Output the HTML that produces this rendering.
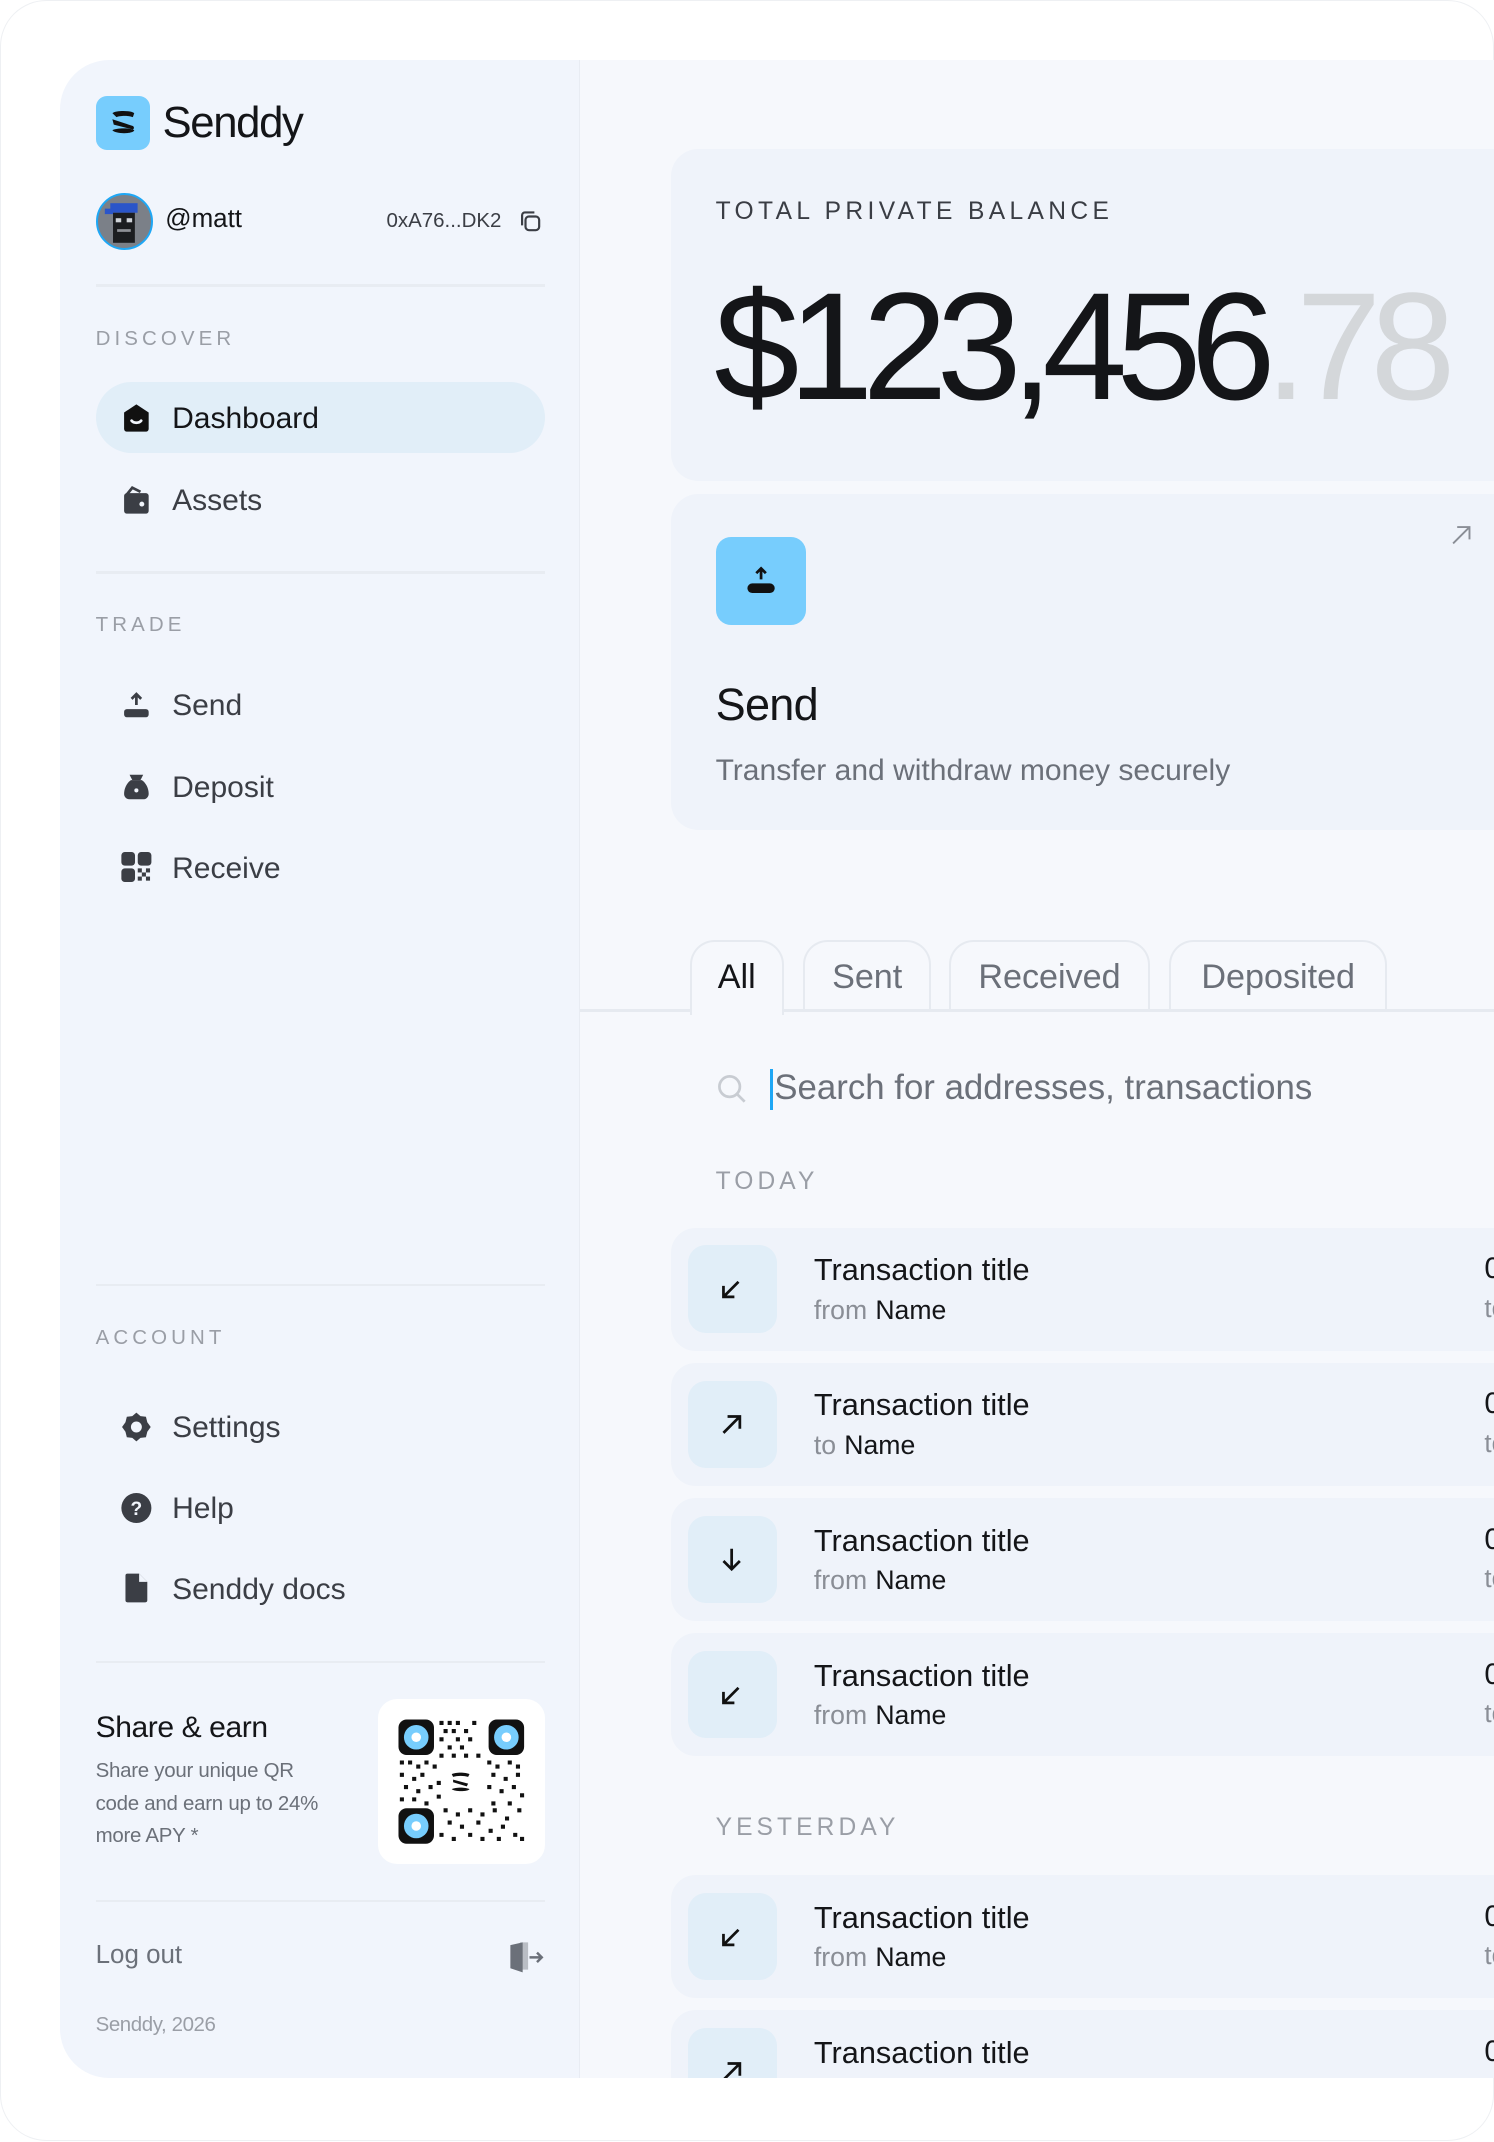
<!DOCTYPE html>
<html><head><meta charset="utf-8"><style>
html{zoom:1.36563}
*{margin:0;padding:0;box-sizing:border-box}
body{width:1094px;height:1568px;background:#fff;font-family:"Liberation Sans",sans-serif;position:relative;overflow:hidden;color:#141518}
.a{position:absolute;white-space:nowrap}
.frame{position:absolute;left:0;top:0;width:1094px;height:1568px;border-radius:34px;border:1px solid #eef0f3}
.side{position:absolute;left:44px;top:44px;width:381px;height:1478px;background:#f1f5fc;border-radius:36px 0 0 36px;border-right:1px solid #e8ecf3}
.main{position:absolute;left:425px;top:44px;width:669px;height:1478px;background:#f6f8fc;overflow:hidden}
.div{position:absolute;left:70px;width:329px;height:2px;background:#e8ecf2}
.lab{position:absolute;left:70px;font-size:15px;letter-spacing:3px;color:#9a9ea6;transform:translateY(-50%)}
.nav{position:absolute;left:126px;font-size:22px;color:#3b3e45;transform:translateY(-50%)}
.ic{position:absolute;left:88px;width:24px;height:24px;transform:translateY(-50%)}
.card{position:absolute;left:66px;width:700px;background:#eff3fa;border-radius:20px}
.tab{position:absolute;top:644px;height:53px;border:2px solid #e6eaf0;border-bottom:none;border-radius:18px 18px 0 0;font-size:25px;color:#6b7079;text-align:center;line-height:52px}
.row{position:absolute;left:66px;width:700px;height:90px;background:#eff3fa;border-radius:18px}
.row .bx{position:absolute;left:13px;top:13px;width:65px;height:64px;background:#e1eef8;border-radius:13px}
.row .bx svg{position:absolute;left:22px;top:22px}
.row .t{position:absolute;left:105px;top:18px;font-size:22.5px;color:#141518}
.row .s{position:absolute;left:105px;top:49px;font-size:19.5px;color:#141518}
.row .s i{font-style:normal;color:#8a8e96;margin-right:6px}
.row .r{position:absolute;left:596px;top:18px;font-size:22px}
.row .r2{position:absolute;left:596px;top:49px;font-size:19px;color:#8a8e96}
</style></head><body>
<div class="frame"></div>
<div class="side"></div>
<div class="a" style="left:70px;top:70px;width:40px;height:40px;background:#77cdfd;border-radius:8px">
<svg width="40" height="40" viewBox="0 0 40 40"><path d="M12 12.5c3-2 13-2 16 0l-1 3c-4-1.5-10-1-12 0z" fill="#111"/><path d="M12 17l15 5c1 .5 1 2 0 2.5L13 21z" fill="#111"/><path d="M12 25c3-1.5 12-2 16 0-.5 3-14 3-16 0z" fill="#111"/></svg></div>
<div class="a" style="left:119px;top:70px;font-size:32px;letter-spacing:-1px;line-height:40px">Senddy</div>
<div class="a" style="left:70px;top:141px;width:42px;height:42px;border-radius:50%;border:2px solid #1ea7f5;background:#7b8088;overflow:hidden">
<svg width="38" height="38" viewBox="0 0 38 38"><rect x="9" y="6" width="20" height="7" fill="#2a55c9"/><rect x="5" y="10" width="6" height="4" fill="#2a55c9"/><rect x="11" y="13" width="16" height="22" fill="#1b1d20"/><rect x="13" y="17" width="4" height="3" fill="#cfd3d8"/><rect x="21" y="17" width="4" height="3" fill="#cfd3d8"/><rect x="14" y="25" width="10" height="2" fill="#8d9096"/></svg></div>
<div class="a" style="left:121px;top:150px;font-size:19px;color:#141518">@matt</div>
<div class="a" style="left:283px;top:153px;font-size:15px;color:#3b3e45">0xA76...DK2</div>
<svg class="a" style="left:379px;top:153px" width="18" height="18" viewBox="0 0 18 18" fill="none" stroke="#3b3e45" stroke-width="1.6"><rect x="5.5" y="5.5" width="10" height="10" rx="2.5"/><path d="M3 12V4.5A2 2 0 0 1 5 2.5h7"/></svg>
<div class="div" style="top:208px"></div>
<div class="lab" style="top:248px">DISCOVER</div>
<div class="a" style="left:70px;top:280px;width:329px;height:52px;background:#e1eef8;border-radius:26px"></div>
<svg class="ic" style="top:306px" viewBox="0 0 24 24"><path d="M3 8l9-6 9 6v12a2 2 0 0 1-2 2H5a2 2 0 0 1-2-2z" fill="#111"/><path d="M8.5 14c1.5 2 5.5 2 7 0" stroke="#f1f5fc" stroke-width="2" fill="none" stroke-linecap="round"/></svg>
<div class="nav" style="top:307px;color:#141518">Dashboard</div>
<svg class="ic" style="top:366px" viewBox="0 0 24 24"><path d="M3 9a2 2 0 0 1 2-2h14a2 2 0 0 1 2 2v11a2 2 0 0 1-2 2H5a2 2 0 0 1-2-2z" fill="#3b3e45"/><path d="M5 8l4-5 6 3" stroke="#3b3e45" stroke-width="2" fill="none"/><circle cx="16" cy="15" r="1.8" fill="#f1f5fc"/></svg>
<div class="nav" style="top:367px">Assets</div>
<div class="div" style="top:418px"></div>
<div class="lab" style="top:458px">TRADE</div>
<svg class="ic" style="top:516px" viewBox="0 0 24 24"><rect x="3" y="15" width="18" height="6" rx="2" fill="#3b3e45"/><path d="M12 12V4M8.5 7.5 12 4l3.5 3.5" stroke="#3b3e45" stroke-width="2" fill="none"/></svg>
<div class="nav" style="top:517px">Send</div>
<svg class="ic" style="top:576px" viewBox="0 0 24 24"><path d="M7 3h10l-2 4H9z" fill="#3b3e45"/><path d="M8 7h8c3 2 5 6 5 10a4 4 0 0 1-4 4H7a4 4 0 0 1-4-4c0-4 2-8 5-10z" fill="#3b3e45"/><circle cx="12" cy="14.5" r="1.5" fill="#f1f5fc"/></svg>
<div class="nav" style="top:577px">Deposit</div>
<svg class="ic" style="top:635px" viewBox="0 0 24 24" fill="#3b3e45"><rect x="1" y="1" width="10" height="10" rx="2.5"/><rect x="13" y="1" width="10" height="10" rx="2.5"/><rect x="1" y="13" width="10" height="10" rx="2.5"/><rect x="13" y="13" width="3" height="3"/><rect x="19" y="13" width="3" height="3"/><rect x="16" y="16" width="3" height="3"/><rect x="13" y="19" width="3" height="3"/><rect x="19" y="19" width="3" height="3"/></svg>
<div class="nav" style="top:636px">Receive</div>
<div class="div" style="top:940px"></div>
<div class="lab" style="top:980px">ACCOUNT</div>
<svg class="ic" style="top:1045px" viewBox="0 0 24 24"><path d="M12 1.5l3 2.5 4 .5 1 4 2.5 3.5-2.5 3.5-1 4-4 .5-3 2.5-3-2.5-4-.5-1-4L1.5 12 4 8.5l1-4 4-.5z" fill="#3b3e45"/><circle cx="12" cy="12" r="4" fill="#f1f5fc"/></svg>
<div class="nav" style="top:1046px">Settings</div>
<svg class="ic" style="top:1104px" viewBox="0 0 24 24"><circle cx="12" cy="12" r="11" fill="#3b3e45"/><text x="12" y="17" text-anchor="middle" font-size="14" font-weight="bold" fill="#f1f5fc" font-family="Liberation Sans">?</text></svg>
<div class="nav" style="top:1105px">Help</div>
<svg class="ic" style="top:1163px" viewBox="0 0 24 24"><path d="M4 3a1.5 1.5 0 0 1 1.5-1.5H14l6 6V21a1.5 1.5 0 0 1-1.5 1.5h-13A1.5 1.5 0 0 1 4 21z" fill="#3b3e45"/><path d="M14 1.5v6h6" fill="#f1f5fc"/></svg>
<div class="nav" style="top:1164px">Senddy docs</div>
<div class="div" style="top:1216px"></div>
<div class="a" style="left:70px;top:1253px;font-size:22px;letter-spacing:-0.3px">Share &amp; earn</div>
<div class="a" style="left:70px;top:1285px;font-size:15px;line-height:24px;color:#6b7079;letter-spacing:-0.2px">Share your unique QR<br>code and earn up to 24%<br>more APY *</div>
<div class="a" style="left:277px;top:1244px;width:122px;height:121px;background:#fff;border-radius:14px">
<svg width="122" height="121" viewBox="0 0 122 121">
<g><rect x="15" y="15" width="26" height="26" rx="6" fill="#111"/><circle cx="28" cy="28" r="9" fill="#77cdfd"/><circle cx="28" cy="28" r="3.5" fill="#fff"/>
<rect x="81" y="15" width="26" height="26" rx="6" fill="#111"/><circle cx="94" cy="28" r="9" fill="#77cdfd"/><circle cx="94" cy="28" r="3.5" fill="#fff"/>
<rect x="15" y="80" width="26" height="26" rx="6" fill="#111"/><circle cx="28" cy="93" r="9" fill="#77cdfd"/><circle cx="28" cy="93" r="3.5" fill="#fff"/></g>
<g fill="#111">
<path d="M45 16h3v3h-3zM51 16h3v3h-3zM57 16h3v3h-3zM48 22h3v3h-3zM54 22h3v3h-3zM63 22h3v3h-3zM45 28h3v3h-3zM57 28h3v3h-3zM66 28h3v3h-3zM51 34h3v3h-3zM60 34h3v3h-3zM45 40h3v3h-3zM54 40h3v3h-3zM63 40h3v3h-3zM72 40h3v3h-3zM69 16h3v3h-3z"/>
<path d="M16 45h3v3h-3zM22 45h3v3h-3zM28 48h3v3h-3zM34 45h3v3h-3zM40 48h3v3h-3zM16 54h3v3h-3zM25 57h3v3h-3zM31 54h3v3h-3zM19 63h3v3h-3zM28 66h3v3h-3zM37 63h3v3h-3zM16 72h3v3h-3zM25 72h3v3h-3zM34 75h3v3h-3zM43 60h3v3h-3zM43 70h3v3h-3z"/>
<path d="M80 45h3v3h-3zM86 48h3v3h-3zM95 45h3v3h-3zM101 48h3v3h-3zM83 54h3v3h-3zM92 57h3v3h-3zM101 54h3v3h-3zM80 63h3v3h-3zM89 66h3v3h-3zM98 63h3v3h-3zM104 69h3v3h-3zM83 75h3v3h-3zM95 75h3v3h-3z"/>
<path d="M48 80h3v3h-3zM57 83h3v3h-3zM66 80h3v3h-3zM75 83h3v3h-3zM84 80h3v3h-3zM93 86h3v3h-3zM102 80h3v3h-3zM51 89h3v3h-3zM60 92h3v3h-3zM72 89h3v3h-3zM81 95h3v3h-3zM90 92h3v3h-3zM99 98h3v3h-3zM45 98h3v3h-3zM54 101h3v3h-3zM66 98h3v3h-3zM75 101h3v3h-3zM87 101h3v3h-3zM104 101h3v3h-3z"/>
<path d="M54 55c3-1.5 10-1.5 13 0l-1 2c-3-1-8-1-11 0zM55 59l11 3-1 2-10-3zM54 66c3-1.5 10-1.5 13 0-1 2-11 2-13 0z"/>
</g></svg></div>
<div class="div" style="top:1391px"></div>
<div class="a" style="left:70px;top:1421px;font-size:19px;color:#6b7079">Log out</div>
<svg class="a" style="left:373px;top:1421px" width="26" height="24" viewBox="0 0 26 24"><path d="M8 1h6v20H8z" fill="#b9bdc4"/><path d="M1 3l9-2v22l-9-3z" fill="#6b7079"/><path d="M15 12h9M20.5 8.5 24 12l-3.5 3.5" stroke="#6b7079" stroke-width="1.8" fill="none"/></svg>
<div class="a" style="left:70px;top:1474px;font-size:15px;color:#9a9ea6;letter-spacing:-0.3px">Senddy, 2026</div>

<div class="main">
<div class="card" style="top:65px;height:243px"></div>
<div class="a" style="left:99px;top:101px;font-size:18px;letter-spacing:3.2px;color:#3a3d44">TOTAL PRIVATE BALANCE</div>
<div class="a" style="left:98px;top:146px;font-size:112px;letter-spacing:-8px;line-height:130px;color:#141518">$123,456<span style="color:#d4d7da">.78</span></div>
<div class="card" style="top:318px;height:246px"></div>
<div class="a" style="left:99px;top:349px;width:66px;height:65px;background:#77cdfd;border-radius:11px">
<svg width="66" height="65" viewBox="0 0 66 65"><rect x="23" y="34" width="20" height="7" rx="3.5" fill="#111"/><path d="M33 31v-8M29.5 26.5 33 23l3.5 3.5" stroke="#111" stroke-width="2" fill="none"/></svg></div>
<svg class="a" style="left:636px;top:339px" width="18" height="18" viewBox="0 0 18 18"><path d="M3 15 15 3M6 3h9v9" stroke="#8a8e96" stroke-width="1.4" fill="none"/></svg>
<div class="a" style="left:99px;top:453px;font-size:33px;letter-spacing:-0.5px">Send</div>
<div class="a" style="left:99px;top:508px;font-size:22px;color:#6b7079">Transfer and withdraw money securely</div>

<div class="a" style="left:0;top:695px;width:669px;height:2px;background:#e6eaf0"></div>
<div class="tab" style="left:80px;width:69px;color:#141518;background:#f6f8fc;height:55px">All</div>
<div class="tab" style="left:163px;width:94px">Sent</div>
<div class="tab" style="left:270px;width:147px">Received</div>
<div class="tab" style="left:431px;width:160px">Deposited</div>
<svg class="a" style="left:99px;top:742px" width="24" height="24" viewBox="0 0 24 24" fill="none" stroke="#c8ccd2" stroke-width="2"><circle cx="10" cy="10" r="7.5"/><path d="M15.5 15.5 21 21"/></svg>
<div class="a" style="left:139px;top:739px;width:2px;height:30px;background:#1ea7f5"></div>
<div class="a" style="left:142px;top:738px;font-size:25.5px;color:#6b7079">Search for addresses, transactions</div>
<div class="a" style="left:99px;top:811px;font-size:18px;letter-spacing:3px;color:#9a9ea6">TODAY</div>

<div class="row" style="top:855px"><div class="bx"><svg width="20" height="20" viewBox="0 0 20 20"><path d="M15 5 4 16M4 8v8h8" stroke="#111" stroke-width="2" fill="none"/></svg></div><div class="t">Transaction title</div><div class="s"><i>from</i>Name</div><div class="r">0.00</div><div class="r2">today</div></div>
<div class="row" style="top:954px"><div class="bx"><svg width="20" height="20" viewBox="0 0 20 20"><path d="M4 16 15 5M7 4h9v9" stroke="#111" stroke-width="2" fill="none"/></svg></div><div class="t">Transaction title</div><div class="s"><i>to</i>Name</div><div class="r">0.00</div><div class="r2">today</div></div>
<div class="row" style="top:1053px"><div class="bx"><svg width="20" height="20" viewBox="0 0 20 20"><path d="M10 2v15M4 11l6 6 6-6" stroke="#111" stroke-width="2" fill="none"/></svg></div><div class="t">Transaction title</div><div class="s"><i>from</i>Name</div><div class="r">0.00</div><div class="r2">today</div></div>
<div class="row" style="top:1152px"><div class="bx"><svg width="20" height="20" viewBox="0 0 20 20"><path d="M15 5 4 16M4 8v8h8" stroke="#111" stroke-width="2" fill="none"/></svg></div><div class="t">Transaction title</div><div class="s"><i>from</i>Name</div><div class="r">0.00</div><div class="r2">today</div></div>
<div class="a" style="left:99px;top:1284px;font-size:18px;letter-spacing:3px;color:#9a9ea6">YESTERDAY</div>
<div class="row" style="top:1329px"><div class="bx"><svg width="20" height="20" viewBox="0 0 20 20"><path d="M15 5 4 16M4 8v8h8" stroke="#111" stroke-width="2" fill="none"/></svg></div><div class="t">Transaction title</div><div class="s"><i>from</i>Name</div><div class="r">0.00</div><div class="r2">today</div></div>
<div class="row" style="top:1428px"><div class="bx"><svg width="20" height="20" viewBox="0 0 20 20"><path d="M4 16 15 5M7 4h9v9" stroke="#111" stroke-width="2" fill="none"/></svg></div><div class="t">Transaction title</div><div class="s"><i>to</i>Name</div><div class="r">0.00</div><div class="r2">today</div></div>
</div>
</body></html>
